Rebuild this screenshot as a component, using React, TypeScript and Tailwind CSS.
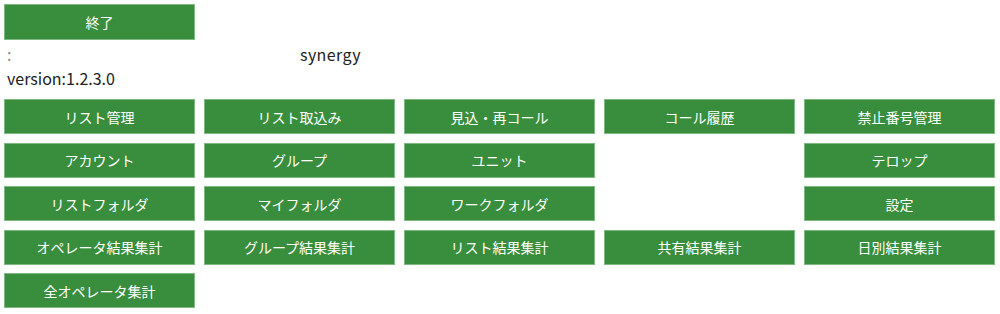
const rows: (string | null)[][] = [
  ["リスト管理", "リスト取込み", "見込・再コール", "コール履歴", "禁止番号管理"],
  ["アカウント", "グループ", "ユニット", null, "テロップ"],
  ["リストフォルダ", "マイフォルダ", "ワークフォルダ", null, "設定"],
  ["オペレータ結果集計", "グループ結果集計", "リスト結果集計", "共有結果集計", "日別結果集計"],
  ["全オペレータ集計", null, null, null, null],
]

const MenuButton = ({ label }: { label: string }) => (
  <button className="h-[35px] w-[191px] bg-[#388e3c] border border-[#7fb982] text-white text-[14px] leading-none flex items-center justify-center">
    {label}
  </button>
)

export default function App() {
  return (
    <div
      className="w-[1000px] h-[314px] bg-white text-[#222] pl-1 pt-1"
      style={{ fontFamily: '"Noto Sans CJK JP", "Noto Sans", sans-serif' }}
    >
      <button className="h-[36px] w-[191px] bg-[#388e3c] border border-[#7fb982] text-white text-[14px] flex items-center justify-center">
        終了
      </button>
      <div className="flex items-center h-[24px] mt-[2px] text-[16px]">
        <span className="w-[296px] pl-[3px] text-[#888]">:</span>
        <span className="tracking-[0.4px]">synergy</span>
      </div>
      <div className="h-[24px] pl-[3px] text-[16px] flex items-center">version:1.2.3.0</div>
      <div className="grid grid-cols-[repeat(5,191px)] gap-x-[9px] gap-y-[8.5px] mt-[9px]">
        {rows.flat().map((label, i) =>
          label ? <MenuButton key={i} label={label} /> : <div key={i} className="h-[35px]" />
        )}
      </div>
    </div>
  )
}
